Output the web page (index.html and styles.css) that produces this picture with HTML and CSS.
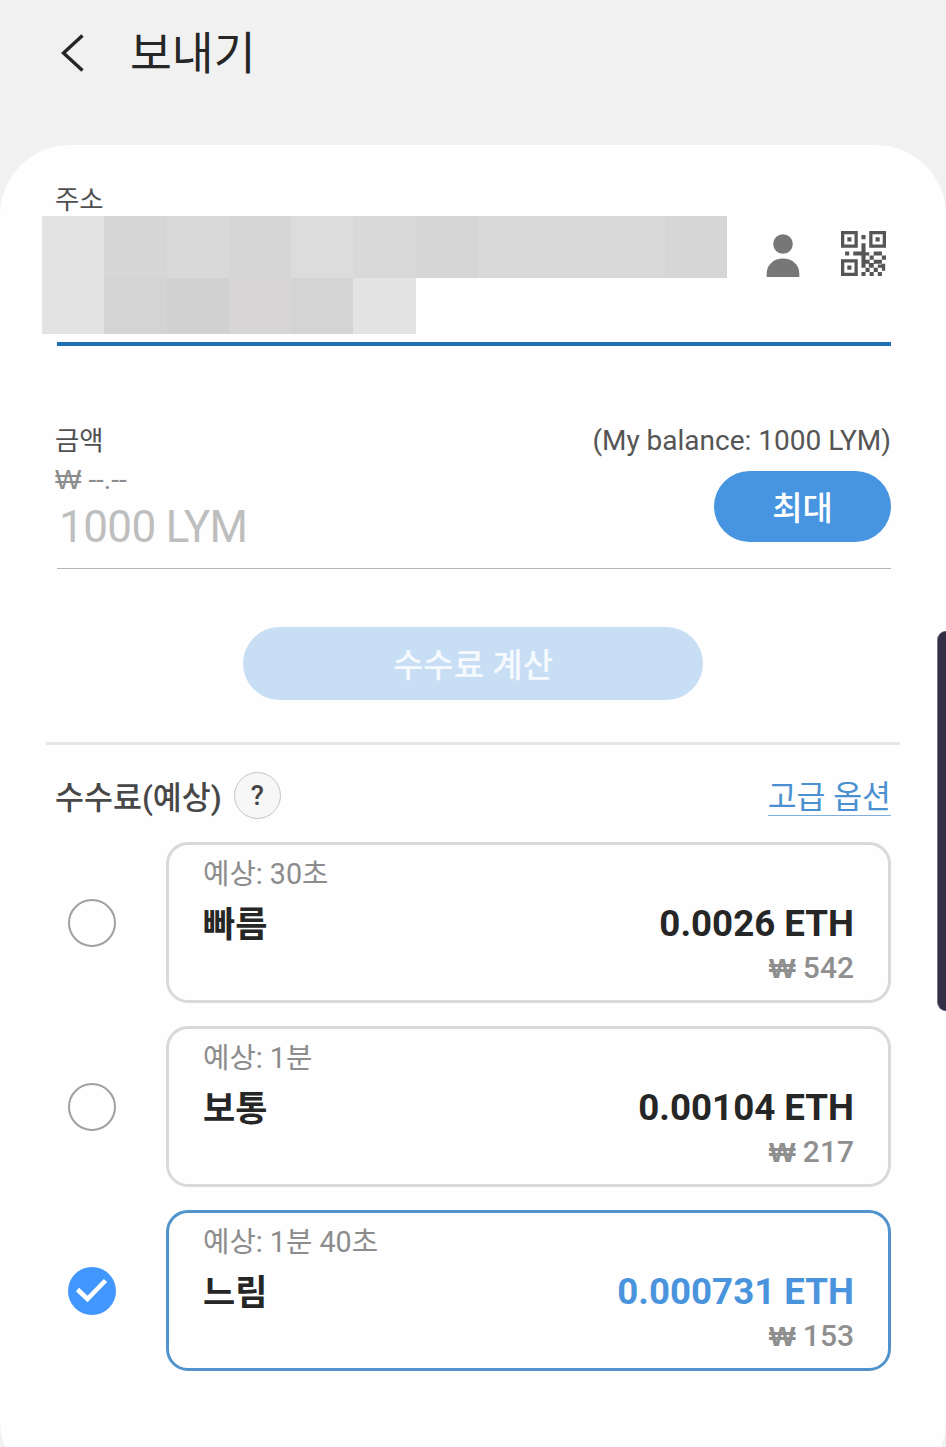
FILE: index.html
```html
<!DOCTYPE html>
<html lang="ko">
<head>
    <meta charset="UTF-8">
    <title>보내기</title>
    <link rel="stylesheet" href="styles.css">
</head>
<body>

<header class="header">
    <svg class="back" viewBox="0 0 24 38" width="24" height="38">
        <path d="M22.5 1.5 L3.5 19 L22.5 36.5" fill="none" stroke="#262626" stroke-width="3.4"/>
    </svg>
    <h1>보내기</h1>
</header>

<main class="card">
    <section class="address">
        <div class="label">주소</div>
        <div class="address-row">
            <div class="mosaic">
                <i class="c1"></i><i class="c4"></i><i class="c3"></i><i class="c4"></i><i class="c2"></i><i class="c3"></i><i class="c4"></i><i class="c3"></i><i class="c3"></i><i class="c3"></i><i class="c4"></i>
                <i class="c1"></i><i class="c5"></i><i class="c6"></i><i class="c7"></i><i class="c5"></i><i class="c1"></i>
            </div>
            <svg class="person" viewBox="0 0 34 44" width="34" height="44">
                <circle cx="17" cy="10" r="9.8" fill="#777"/>
                <path d="M0.7 43 V39.5 C0.7 30.5 8 24.5 17 24.5 S33.3 30.5 33.3 39.5 V43 Z" fill="#777"/>
            </svg>
            <svg class="qr" viewBox="0 0 11 11" width="45" height="45">
                <g fill="none" stroke="#555" stroke-width="0.8">
                    <rect x="0.4" y="0.4" width="3.3" height="3.3"/>
                    <rect x="7.3" y="0.4" width="3.3" height="3.3"/>
                    <rect x="0.4" y="7.3" width="3.3" height="3.3"/>
                </g>
                <path fill="#555" d="M1.55 1.55h1v1h-1z M8.45 1.55h1v1h-1z M1.55 8.45h1v1h-1z
                    M5 1h1v1h-1z M5 3h1v2h-1z M1 5h1v1h-1z M3 5h3v1h-3z M8 5h2v1h-2z
                    M6 5.2h.9v.8h-.9z M5 6h1v3h-1z M7 6h1v1h-1z M10 6h1v1h-1z M6 7h1v1h-1z M8 7h2v1h-2z
                    M6.8 7.8h1.2v1h-1.2z M10 8h.8v1.7h-.8z M6 9h1v1h-1z M8 9h1v1h-1z M7 8h1v1h-1z M9 8.2h1v.8h-1z
                    M5 10h1v1h-1z M7 10h1v1h-1z M9 10h1v1h-1z"/>
            </svg>
        </div>
    </section>

    <section class="amount">
        <div class="amount-info">
            <div class="label">금액</div>
            <div class="fiat"><span class="won">₩</span> --.--</div>
            <div class="value">1000 LYM</div>
        </div>
        <div class="amount-side">
            <div class="balance">(My balance: 1000 LYM)</div>
            <button class="btn max">최대</button>
        </div>
    </section>

    <button class="btn calc">수수료 계산</button>

    <section class="fee">
        <div class="fee-head">
            <h2>수수료(예상)</h2>
            <span class="help">?</span>
            <a class="advanced">고급 옵션</a>
        </div>

        <div class="option">
            <span class="radio"></span>
            <div class="box">
                <div class="time">예상: 30초</div>
                <div class="line"><b class="name">빠름</b><b class="eth">0.0026 ETH</b></div>
                <div class="krw"><span class="won">₩</span> 542</div>
            </div>
        </div>
        <div class="option">
            <span class="radio"></span>
            <div class="box">
                <div class="time">예상: 1분</div>
                <div class="line"><b class="name">보통</b><b class="eth">0.00104 ETH</b></div>
                <div class="krw"><span class="won">₩</span> 217</div>
            </div>
        </div>
        <div class="option selected">
            <span class="radio">
                <svg viewBox="0 0 48 48" width="48" height="48">
                    <path d="M9.5 22.5 L19.5 32 L37.5 13.5" fill="none" stroke="#fff" stroke-width="4.6"/>
                </svg>
            </span>
            <div class="box">
                <div class="time">예상: 1분 40초</div>
                <div class="line"><b class="name">느림</b><b class="eth">0.000731 ETH</b></div>
                <div class="krw"><span class="won">₩</span> 153</div>
            </div>
        </div>
    </section>
</main>

<div class="edge"></div>

</body>
</html>
```
FILE: styles.css
```css
* {
    box-sizing: border-box;
}
body {
    margin: 0;
    height: 1447px;
    overflow: hidden;
    position: relative;
    background: #f1f1f1;
    color: #262626;
    font-family: Roboto, "Noto Sans CJK KR", sans-serif;
}
.header {
    display: flex;
    align-items: flex-start;
    height: 145px;
    padding: 34px 0 0 60px;
}
.back {
    display: block;
}
h1 {
    margin: -12px 0 0 46px;
    font-size: 45.5px;
    font-weight: 400;
    line-height: 66px;
}
.card {
    height: 1346px;
    padding: 37px 55px 0;
    border-radius: 70px;
    background: #fefefe;
}

/* address */
.address {
    height: 164px;
}
.label {
    height: 34px;
    font-size: 26.4px;
    line-height: 36px;
    color: #505050;
}
.address-row {
    display: flex;
    height: 130px;
    margin-left: 2px;
    border-bottom: 4px solid #1f6fb2;
}
.mosaic {
    display: grid;
    grid-template-columns: repeat(11, 1fr);
    grid-template-rows: 62px 56px;
    width: 685px;
    height: 118px;
    margin-left: -15px;
}
.c1 { background: #e3e3e3; }
.c2 { background: #dcdcdc; }
.c3 { background: #d9d9d9; }
.c4 { background: #d6d6d6; }
.c5 { background: #d4d4d4; }
.c6 { background: #d1d1d1; }
.c7 { background: #d7d5d5; }
.person {
    margin: 18px 0 0 39px;
}
.qr {
    margin: 15px 0 0 41px;
}

/* amount */
.amount {
    display: flex;
    justify-content: space-between;
    height: 223px;
    margin-left: 2px;
    padding-top: 77px;
    border-bottom: 1px solid #b5b5b5;
}
.amount-info {
    margin-left: -2px;
}
.won {
    font-family: "Liberation Sans", sans-serif;
}
.fiat {
    height: 44px;
    font-size: 28px;
    line-height: 46px;
    color: #8c8c8c;
}
.value {
    padding-left: 4px;
    font-size: 44px;
    line-height: 52px;
    letter-spacing: -0.6px;
    color: #bebebe;
}
.amount-side {
    display: flex;
    flex-direction: column;
    align-items: flex-end;
}
.balance {
    height: 48px;
    font-size: 28px;
    line-height: 35px;
    color: #555;
}
.btn {
    display: block;
    padding: 0 0 1px;
    border: 0;
    border-radius: 37px;
    color: #fff;
    font-family: inherit;
    font-size: 33px;
    font-weight: 500;
}
.max {
    width: 177px;
    height: 71px;
    background: #4795e1;
}
.calc {
    width: 460px;
    height: 73px;
    margin: 58px auto 42px;
    background: #c8def5;
    color: #f6fafe;
}

/* fee */
.fee {
    margin: 0 -9px;
    padding: 27px 9px 0;
    border-top: 3px solid #e6e6e6;
}
.fee-head {
    display: flex;
    align-items: center;
    height: 48px;
    margin-bottom: 22px;
}
h2 {
    margin: -2px 0 0;
    font-size: 31.5px;
    font-weight: 500;
    color: #484848;
}
.help {
    width: 47px;
    height: 47px;
    margin: -1px 0 0 12px;
    border: 1px solid #c4c4c4;
    border-radius: 50%;
    background: #f7f7f7;
    color: #444;
    font-size: 27px;
    font-weight: 500;
    line-height: 46px;
    text-align: center;
}
.advanced {
    height: 39px;
    margin-left: auto;
    border-bottom: 1px solid #7fb0dc;
    color: #4a90d0;
    font-size: 31.4px;
    line-height: 42px;
}
.option {
    display: flex;
    align-items: center;
    justify-content: space-between;
    margin: 0 0 23px 13px;
}
.radio {
    width: 48px;
    height: 48px;
    border: 2px solid #a0a0a0;
    border-radius: 50%;
}
.radio svg {
    display: block;
}
.box {
    width: 725px;
    height: 161px;
    padding: 8px 34px 0;
    border: 3px solid #d9d9d9;
    border-radius: 22px;
}
.time {
    height: 44px;
    font-size: 28.7px;
    line-height: 43px;
    color: #8c8c8c;
}
.line {
    display: flex;
    justify-content: space-between;
    height: 54px;
    line-height: 54px;
}
.name {
    padding-top: 2px;
    font-size: 35px;
}
.eth {
    font-size: 36.7px;
}
.krw {
    height: 34px;
    font-size: 30px;
    font-weight: 500;
    line-height: 34px;
    text-align: right;
    color: #8f8f8f;
}
.krw .won {
    font-size: 28px;
    font-weight: 700;
}
.selected .radio {
    border: 0;
    background: #4297ff;
}
.selected .box {
    border-color: #5193cc;
}
.selected .eth {
    color: #4a94dd;
}

/* panel handle on the screen edge */
.edge {
    position: absolute;
    top: 631px;
    right: 0;
    width: 9px;
    height: 380px;
    border-left: 1px solid #77758a;
    border-radius: 12px 0 0 12px;
    background: #332f47;
}
```
